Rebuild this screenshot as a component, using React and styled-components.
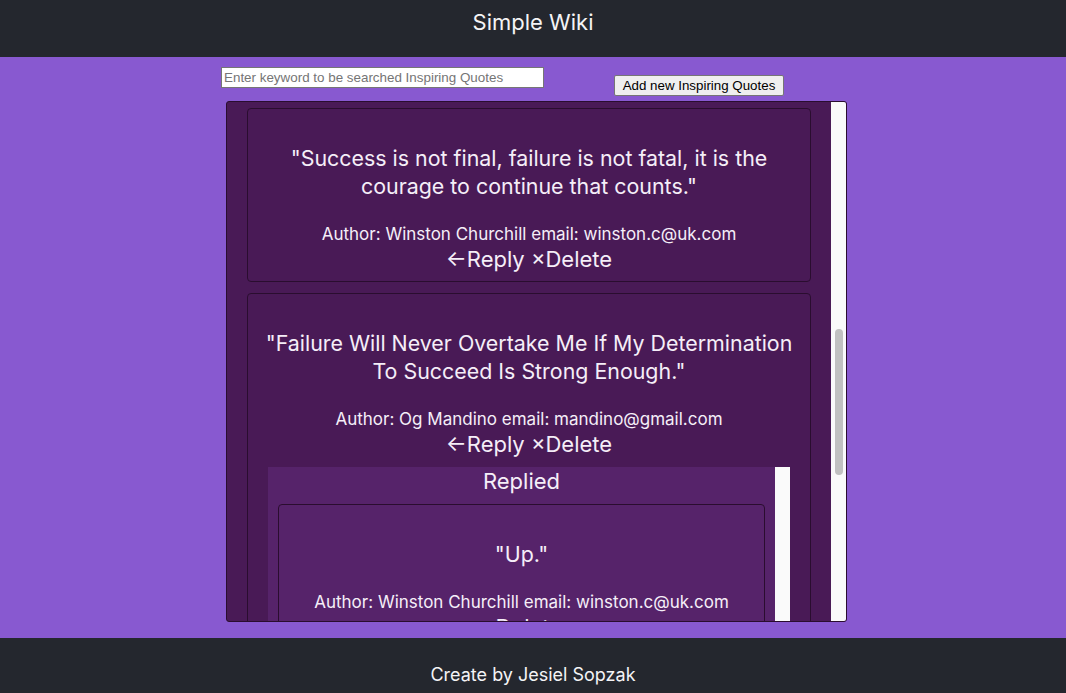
import React, { useLayoutEffect, useRef, useState } from "react";
import styled, { createGlobalStyle } from "styled-components";

const GlobalStyle = createGlobalStyle`
  html, body {
    margin: 0;
    padding: 0;
    background: #8859d0;
    font-family: Inter, "Noto Sans", sans-serif;
  }
`;

const quotes = [
  { id: 1, text: "Stay hungry, stay foolish.", author: "Steve Jobs", email: "steve@apple.com" },
  {
    id: 2,
    text: "The only way to do great work is to love what you do, and never settle for less.",
    author: "Steve Jobs",
    email: "steve@apple.com",
  },
  { id: 3, text: "It always seems impossible until it's done.", author: "Nelson Mandela", email: "mandela@za.com" },
  { id: 4, text: "Believe you can and you're halfway there.", author: "Theodore Roosevelt", email: "teddy@us.com" },
  { id: 5, text: "Whatever you are, be a good one.", author: "Abraham Lincoln", email: "abe@us.com" },
  {
    id: 6,
    text: "Success is not final, failure is not fatal, it is the courage to continue that counts.",
    author: "Winston Churchill",
    email: "winston.c@uk.com",
    target: true,
  },
  {
    id: 7,
    text: "Failure Will Never Overtake Me If My Determination To Succeed Is Strong Enough.",
    author: "Og Mandino",
    email: "mandino@gmail.com",
    replies: [
      { id: 71, text: "Up.", author: "Winston Churchill", email: "winston.c@uk.com" },
      { id: 72, text: "Keep going.", author: "Og Mandino", email: "mandino@gmail.com" },
    ],
  },
  { id: 8, text: "Dream big.", author: "Og Mandino", email: "mandino@gmail.com" },
  { id: 9, text: "Never give up.", author: "Winston Churchill", email: "winston.c@uk.com" },
];

const Quote = ({ quote, nested, innerRef }) => (
  <Card nested={nested} ref={innerRef}>
    <QuoteText>"{quote.text}"</QuoteText>
    <Meta>
      Author: {quote.author} email: {quote.email}
    </Meta>
    <Actions>
      {!nested && <Action>←Reply</Action>} <Action>×Delete</Action>
    </Actions>
    {quote.replies && (
      <Replies>
        <RepliesBody>
          <RepliesTitle>Replied</RepliesTitle>
          {quote.replies.map(r => (
            <Quote key={r.id} quote={r} nested />
          ))}
        </RepliesBody>
        <Track />
      </Replies>
    )}
  </Card>
);

const App = () => {
  const listRef = useRef(null);
  const targetRef = useRef(null);
  const [thumb, setThumb] = useState({ top: 0, height: 0 });

  useLayoutEffect(() => {
    const list = listRef.current;
    if (!list || !targetRef.current) return;
    list.scrollTop = targetRef.current.offsetTop - 6;
    const { scrollTop, scrollHeight, clientHeight } = list;
    setThumb({
      top: (scrollTop / scrollHeight) * clientHeight,
      height: (clientHeight / scrollHeight) * clientHeight,
    });
  }, []);

  return (
    <>
      <GlobalStyle />
      <Page>
        <Header>Simple Wiki</Header>
        <Main>
          <Wrapper>
            <Toolbar>
              <Search placeholder="Enter keyword to be searched Inspiring Quotes" />
              <AddButton>Add new Inspiring Quotes</AddButton>
            </Toolbar>
            <Frame>
              <List ref={listRef}>
                {quotes.map(q => (
                  <Quote key={q.id} quote={q} innerRef={q.target ? targetRef : null} />
                ))}
              </List>
              <Track>
                <Thumb style={{ marginTop: thumb.top, height: thumb.height }} />
              </Track>
            </Frame>
          </Wrapper>
        </Main>
        <Footer>Create by Jesiel Sopzak</Footer>
      </Page>
    </>
  );
};

export default App;

const Page = styled.div`
  display: flex;
  flex-direction: column;
  min-height: 100vh;
`;

const Header = styled.header`
  height: 57px;
  box-sizing: border-box;
  padding-top: 8px;
  background: #24272e;
  color: #f4f4f6;
  font-size: 22px;
  line-height: 28px;
  text-align: center;
`;

const Main = styled.main`
  padding: 10px 0 16px;
`;

const Wrapper = styled.div`
  width: 626px;
  margin: 0 auto;
`;

const Toolbar = styled.div`
  display: flex;
  align-items: flex-start;
  height: 28px;
  margin-bottom: 6px;
`;

const Search = styled.input`
  box-sizing: border-box;
  width: 323px;
  height: 21px;
  margin-left: 1px;
  padding: 1px 2px;
  border: 1px solid #767676;
  border-radius: 0;
  background: #fff;
  font-family: "Liberation Sans", Arial, sans-serif;
  font-size: 13.4px;
  color: #000;
  outline: none;
  ::placeholder {
    color: #757575;
  }
`;

const AddButton = styled.button`
  box-sizing: border-box;
  margin: 8px 0 0 70px;
  height: 21px;
  width: 170px;
  padding: 1px 6px;
  border: 1px solid #767676;
  border-radius: 2px;
  background: #efefef;
  color: #000;
  font-family: "Liberation Sans", Arial, sans-serif;
  font-size: 13.33px;
  cursor: pointer;
`;

const Frame = styled.div`
  box-sizing: border-box;
  display: flex;
  width: 621px;
  height: 521px;
  margin-left: 6px;
  background: #491a56;
  border: 1px solid #2a0d2f;
  border-radius: 3px;
  overflow: hidden;
`;

const List = styled.div`
  position: relative;
  flex: 1;
  box-sizing: border-box;
  padding: 6px 0;
  display: flex;
  flex-direction: column;
  gap: 11px;
  overflow-y: scroll;
  scrollbar-width: none;
  &::-webkit-scrollbar {
    display: none;
  }
`;

const Track = styled.div`
  flex: 0 0 15px;
  box-sizing: border-box;
  padding: 0 3px 0 4px;
  background: #fafafa;
`;

const Thumb = styled.div`
  width: 8px;
  border-radius: 4px;
  background: #c1c1c1;
`;

const Card = styled.div`
  flex-shrink: 0;
  margin: ${p => (p.nested ? "9px 10px 0" : "0 20px")};
  padding: 20px 0 8px;
  border: 1px solid #2a0d2f;
  border-radius: 4px;
  color: #f5eef8;
  text-align: center;
`;

const QuoteText = styled.p`
  margin: 15px 0 23px;
  padding: 0 10px;
  font-size: 21.4px;
  line-height: 28px;
`;

const Meta = styled.div`
  font-size: 17px;
  line-height: 22px;
`;

const Actions = styled.div`
  font-size: 22px;
  line-height: 28px;
`;

const Action = styled.span`
  cursor: pointer;
`;

const Replies = styled.div`
  display: flex;
  margin: 9px 20px 0;
  background: #56236a;
`;

const RepliesBody = styled.div`
  flex: 1;
  min-width: 0;
  padding-bottom: 10px;
`;

const RepliesTitle = styled.div`
  font-size: 22px;
  line-height: 28px;
`;

const Footer = styled.footer`
  margin-top: auto;
  padding: 26px 0 20px;
  background: #24272e;
  color: #f4f4f6;
  font-size: 18px;
  line-height: 22px;
  text-align: center;
`;
